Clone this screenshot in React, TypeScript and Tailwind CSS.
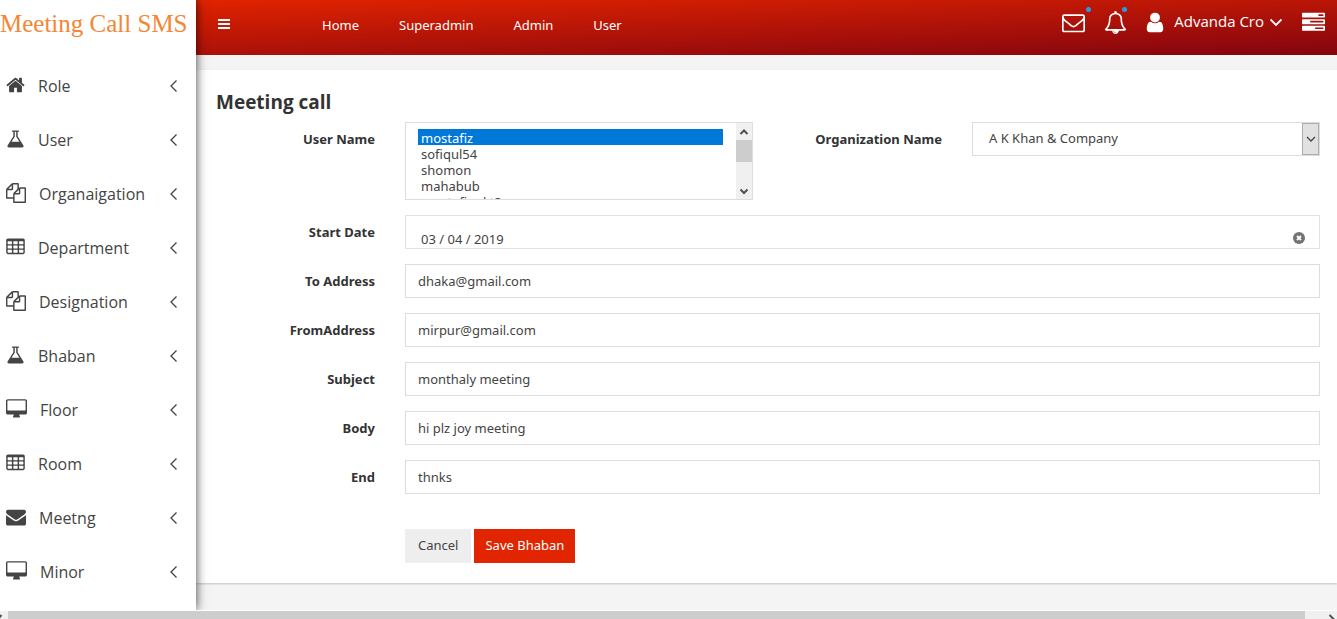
import React from "react";

type IconShape = { box: string; width: string; path: string };

const cell = (x: number, y: number) =>
  `M${x} ${y}v-192q0-14-9-23t-23-9h-320q-14 0-23 9t-9 23v192q0 14 9 23t23 9h320q14 0 23-9t9-23z`;

const TABLE_PATH =
  [576, 1088, 1600].flatMap((x) => [1376, 992, 608].map((y) => cell(x, y))).join("") +
  "M1728 288v1088q0 66-47 113t-113 47h-1344q-66 0-113-47t-47-113v-1088q0-66 47-113t113-47h1344q66 0 113 47t47 113z";

const icons: Record<string, IconShape> = {
  home: {
    box: "64 0 1664 1792",
    width: "w-[19px]",
    path: "M1472 992v480q0 26-19 45t-45 19h-384v-384h-256v384h-384q-26 0-45-19t-19-45v-480q0-1 .5-3t.5-3l575-474 575 474q1 2 1 6zm223-69l-62 74q-8 9-21 11h-3q-13 0-21-7l-692-577-692 577q-12 8-24 7-13-2-21-11l-62-74q-8-10-7-23.5t11-21.5l719-599q32-26 76-26t76 26l244 204v-195q0-14 9-23t23-9h192q14 0 23 9t9 23v408l219 182q10 8 11 21.5t-7 23.5z",
  },
  flask: {
    box: "64 0 1664 1792",
    width: "w-[19px]",
    path: "M1591 1448q56 89 21.5 152.5t-140.5 63.5h-1152q-106 0-140.5-63.5t21.5-152.5l503-793v-399h-64q-26 0-45-19t-19-45 19-45 45-19h512q26 0 45 19t19 45-19 45-45 19h-64v399zm-779-725l-272 429h712l-272-429-20-31v-436h-128v436z",
  },
  files: {
    box: "0 0 1792 1792",
    width: "w-[20px]",
    path: "M1696 384q40 0 68 28t28 68v1216q0 40-28 68t-68 28h-960q-40 0-68-28t-28-68v-288h-544q-40 0-68-28t-28-68v-672q0-40 20-88t48-76l408-408q28-28 76-48t88-20h416q40 0 68 28t28 68v328q68-40 128-40h416zm-544 213l-299 299h299v-299zm-640-384l-299 299h299v-299zm196 647l316-316v-416h-384v416q0 40-28 68t-68 28h-416v640h512v-256q0-40 20-88t48-76zm956 804v-1152h-384v416q0 40-28 68t-68 28h-416v640h896z",
  },
  table: { box: "64 0 1664 1792", width: "w-[19px]", path: TABLE_PATH },
  desktop: {
    box: "-64 0 1920 1792",
    width: "w-[21px]",
    path: "M1728 992v-832q0-13-9.5-22.5t-22.5-9.5h-1600q-13 0-22.5 9.5t-9.5 22.5v832q0 13 9.5 22.5t22.5 9.5h1600q13 0 22.5-9.5t9.5-22.5zm128-832v1088q0 66-47 113t-113 47h-544q0 37 16 77.5t32 71 16 43.5q0 26-19 45t-45 19h-512q-26 0-45-19t-19-45q0-14 16-44t32-70 16-78h-544q-66 0-113-47t-47-113v-1088q0-66 47-113t113-47h1600q66 0 113 47t47 113z",
  },
  envelope: {
    box: "0 0 1792 1792",
    width: "w-[20px]",
    path: "M1792 710v794q0 66-47 113t-113 47h-1472q-66 0-113-47t-47-113v-794q44 49 101 87 362 246 497 345 57 42 92.5 65.5t94.5 48 110 24.5h2q51 0 110-24.5t94.5-48 92.5-65.5q170-123 498-345 57-39 100-87zm0-294q0 79-49 151t-122 123q-376 261-468 325-10 7-42.5 31t-54 38.5-52 32.5-57.5 27-50 9h-2q-23 0-50-9t-57.5-27-52-32.5-54-38.5-42.5-31q-91-64-262-182.5t-205-142.5q-62-42-117-115.5t-55-136.5q0-78 41.5-130t118.5-52h1472q65 0 112.5 47t47.5 113z",
  },
};

const MAIL_PATH =
  "M1664 1504v-768q-32 36-69 66-268 206-426 338-51 43-83 67t-86.5 48.5-102.5 24.5h-2q-48 0-102.5-24.5t-86.5-48.5-83-67q-158-132-426-338-37-30-69-66v768q0 13 9.5 22.5t22.5 9.5h1472q13 0 22.5-9.5t9.5-22.5zm0-1051v-24.5l-.5-13-3-12.5-5.5-9-9-7.5-14-2.5h-1472q-13 0-22.5 9.5t-9.5 22.5q0 168 147 284 193 152 401 317 6 5 35 29.5t46 37.5 44.5 31.5 50.5 27.5 43 9h2q20 0 43-9t50.5-27.5 44.5-31.5 46-37.5 35-29.5q208-165 401-317 54-43 100.5-115.5t46.5-131.5zm128-37v1088q0 66-47 113t-113 47h-1472q-66 0-113-47t-47-113v-1088q0-66 47-113t113-47h1472q66 0 113 47t47 113z";
const BELL_PATH =
  "M912 1696q0-16-16-16-59 0-101.5-42.5t-42.5-101.5q0-16-16-16t-16 16q0 73 51.5 124.5t124.5 51.5q16 0 16-16zm-666-288h1300q-266-300-266-832 0-51-24-105t-69-103-121.5-80.5-169.5-31.5-169.5 31.5-121.5 80.5-69 103-24 105q0 532-266 832zm1482 0q0 52-38 90t-90 38h-448q0 106-75 181t-181 75-181-75-75-181h-448q-52 0-90-38t-38-90q50-42 91-88t85-119.5 74.5-158.5 50-206 19.5-260q0-152 117-282.5t307-158.5q-8-19-8-39 0-40 28-68t68-28 68 28 28 68q0 20-8 39 190 28 307 158.5t117 282.5q0 139 19.5 260t50 206 74.5 158.5 85 119.5 91 88z";
const USER_PATH =
  "M1536 1399q0 109-62.5 187t-150.5 78h-854q-88 0-150.5-78t-62.5-187q0-85 8.5-160.5t31.5-152 58.5-131 94-89 134.5-34.5q131 128 313 128t313-128q76 0 134.5 34.5t94 89 58.5 131 31.5 152 8.5 160.5zm-256-887q0 159-112.5 271.5t-271.5 112.5-271.5-112.5-112.5-271.5 112.5-271.5 271.5-112.5 271.5 112.5 112.5 271.5z";
const TASKS_PATH =
  "M1024 1408h640v-128h-640v128zm-384-512h1024v-128h-1024v128zm640-512h384v-128h-384v128zm512 832v256q0 26-19 45t-45 19h-1664q-26 0-45-19t-19-45v-256q0-26 19-45t45-19h1664q26 0 45 19t19 45zm0-512v256q0 26-19 45t-45 19h-1664q-26 0-45-19t-19-45v-256q0-26 19-45t45-19h1664q26 0 45 19t19 45zm0-512v256q0 26-19 45t-45 19h-1664q-26 0-45-19t-19-45v-256q0-26 19-45t45-19h1664q26 0 45 19t19 45z";

const menu: [keyof typeof icons, string][] = [
  ["home", "Role"],
  ["flask", "User"],
  ["files", "Organaigation"],
  ["table", "Department"],
  ["files", "Designation"],
  ["flask", "Bhaban"],
  ["desktop", "Floor"],
  ["table", "Room"],
  ["envelope", "Meetng"],
  ["desktop", "Minor"],
];

function Chevron({ d, className, stroke = 1 }: { d: string; className: string; stroke?: number }) {
  return (
    <svg viewBox="0 0 12 12" className={className} fill="none" stroke="currentColor" strokeWidth={stroke} aria-hidden="true">
      <path d={d} />
    </svg>
  );
}

function Sidebar() {
  return (
    <aside className="z-10 w-[196px] shrink-0 bg-white shadow-[0_0_10px_rgba(0,0,0,0.75)]">
      <a href="#home" className="block h-[59px] whitespace-nowrap pt-2 font-['Liberation_Serif',serif] text-[25px] leading-8 text-[#f58634]">
        Meeting Call SMS
      </a>
      <nav className="font-['Open_Sans',sans-serif]">
        {menu.map(([name, label]) => (
          <a key={label} href={`#${label}`} className="flex h-[54px] items-center pl-1.5 pr-4 text-base text-[#444]">
            <svg viewBox={icons[name].box} className={`${icons[name].width} mb-0.5 mr-[13px] h-5 shrink-0`} fill="currentColor" aria-hidden="true">
              <path d={icons[name].path} fillRule={name === "table" ? "evenodd" : "nonzero"} />
            </svg>
            <span className="flex-1">{label}</span>
            <Chevron d="M8.500 0.500 3 6l5.500 5.500" className="size-3" stroke={1.3} />
          </a>
        ))}
      </nav>
    </aside>
  );
}

function Header() {
  return (
    <header className="flex h-[55px] items-start bg-[linear-gradient(178deg,#e12300,#83040f)] pl-[22px] pr-3 text-white">
      <button type="button" aria-label="Toggle menu" className="mt-[19px]">
        <svg viewBox="0 0 12 11" className="h-[11px] w-3" fill="currentColor" aria-hidden="true">
          <path d="M0 0h12v2H0zM0 4h12v2H0zM0 8h12v2H0z" />
        </svg>
      </button>
      <nav className="ml-[92px] mt-[15px] flex gap-10 text-[13px] leading-5">
        {["Home", "Superadmin", "Admin", "User"].map((t) => (
          <a key={t} href={`#${t}`}>{t}</a>
        ))}
      </nav>
      <div className="ml-auto flex h-11 items-center">
        <button type="button" aria-label="Messages" className="relative mr-[19px]">
          <svg viewBox="0 0 1792 1792" className="size-[23px]" fill="currentColor" aria-hidden="true"><path d={MAIL_PATH} /></svg>
          <span className="absolute -right-1.5 -top-1 size-[5px] rounded-full bg-[#2d9ae0]" />
        </button>
        <button type="button" aria-label="Notifications" className="relative mr-[19px]">
          <svg viewBox="0 0 1792 1792" className="size-[23px]" fill="currentColor" aria-hidden="true"><path d={BELL_PATH} /></svg>
          <span className="absolute right-0 -top-1 size-[5px] rounded-full bg-[#2d9ae0]" />
        </button>
        <button type="button" className="flex items-center font-['Open_Sans',sans-serif] text-[15px]">
          <svg viewBox="256 0 1280 1792" className="mr-2.5 h-[23px] w-[18px]" fill="currentColor" aria-hidden="true"><path d={USER_PATH} /></svg>
          <span className="pb-0.5">Advanda Cro</span>
          <Chevron d="M0.5 3.5 6 9l5.5-5.500" className="ml-1.5 size-3" stroke={1.8} />
        </button>
        <button type="button" aria-label="Tasks" className="ml-5">
          <svg viewBox="0 0 1792 1792" className="size-[23px]" fill="currentColor" aria-hidden="true"><path d={TASKS_PATH} /></svg>
        </button>
      </div>
    </header>
  );
}

const control = "block w-full border border-[#ddd] bg-white text-[13px] text-[#444] outline-none";
const labelStyle = "px-[15px] pt-[7px] text-right text-[13px] font-bold leading-5 text-[#333]";

function TextRow({ id, label, value }: { id: string; label: string; value: string }) {
  return (
    <>
      <label htmlFor={id} className={`${labelStyle} col-span-2`}>{label}</label>
      <div className="col-span-10 px-[15px]">
        <input id={id} defaultValue={value} className={`${control} h-[34px] px-3`} />
      </div>
    </>
  );
}

function UserList() {
  return (
    <div className="col-span-4 px-[15px]">
      <div className="flex h-[78px] border border-[#ddd]">
        <select
          id="users"
          multiple
          defaultValue={["mostafiz"]}
          className="h-full min-w-0 flex-1 appearance-none overflow-y-scroll bg-white py-1.5 pl-3 pr-[13px] text-[13px] text-[#444] outline-none [scrollbar-width:none]"
        >
          {["mostafiz", "sofiqul54", "shomon", "mahabub", "mostafiqul t3"].map((u) => (
            <option
              key={u}
              className="h-4 min-h-4 px-[3px] py-0 leading-[14px] checked:bg-[linear-gradient(#0078d7,#0078d7)] checked:[-webkit-text-fill-color:#fff]"
            >
              {u}
            </option>
          ))}
        </select>
        <div className="flex w-4 flex-col items-center bg-[#f0f0f0] text-[#505050]" aria-hidden="true">
          <Chevron d="M2.5 8 6 4.5 9.500 8" className="mt-[3px] size-3" stroke={2} />
          <div className="mt-0.5 h-[22px] w-full bg-[#cdcdcd]" />
          <Chevron d="M2.500 4.500 6 8l3.500-3.500" className="mb-0.5 mt-auto size-3" stroke={2} />
        </div>
      </div>
    </div>
  );
}

export default function App() {
  return (
    <div className="flex min-h-screen flex-col bg-white font-['Noto_Sans','Open_Sans',sans-serif]">
      <div className="flex flex-1 overflow-hidden">
        <Sidebar />
        <div className="min-w-0 flex-1 bg-[#f4f4f4]">
          <Header />
          <main className="mt-[15px] bg-white pb-5 pl-[5px] pr-0.5 pt-[18px] shadow-[0_1px_2px_rgba(0,0,0,0.2)]">
            <h1 className="px-[15px] font-['Open_Sans',sans-serif] text-[19px] font-bold leading-7 text-[#333]">Meeting call</h1>
            <form className="mt-1.5 grid grid-cols-12 gap-y-[15px]">
              <label htmlFor="users" className={`${labelStyle} col-span-2`}>User Name</label>
              <UserList />
              <label htmlFor="org" className={`${labelStyle} col-span-2`}>Organization Name</label>
              <div className="col-span-4 px-[15px]">
                <div className="flex h-[34px] border border-[#ddd]">
                  <select id="org" className="min-w-0 flex-1 appearance-none bg-white px-4 text-[13px] text-[#444] outline-none">
                    <option>A K Khan &amp; Company</option>
                  </select>
                  <span className="flex w-[17px] items-center justify-center border border-[#adadad] bg-[#e1e1e1] text-[#444]" aria-hidden="true">
                    <Chevron d="M2 4l4 4 4-4" className="size-3" stroke={1.3} />
                  </span>
                </div>
              </div>
              <label htmlFor="date" className={`${labelStyle} col-span-2`}>Start Date</label>
              <div className="col-span-10 px-[15px]">
                <div className="flex h-[34px] items-end border border-[#e2e2e2] pl-[15px] pr-3.5">
                  <input id="date" defaultValue="03 / 04 / 2019" className="h-[18px] min-w-0 flex-1 bg-white text-[13px] leading-[18px] text-[#444] outline-none" />
                  <button type="button" aria-label="Clear date" className="mb-1">
                    <svg viewBox="0 0 12 12" className="size-3" aria-hidden="true">
                      <circle cx="6" cy="6" r="6" fill="#737373" />
                      <path d="M4 4l4 4M8 4 4 8" stroke="#fff" strokeWidth="1.800" />
                    </svg>
                  </button>
                </div>
              </div>
              <TextRow id="to" label="To Address" value="dhaka@gmail.com" />
              <TextRow id="from" label="FromAddress" value="mirpur@gmail.com" />
              <TextRow id="subject" label="Subject" value="monthaly meeting" />
              <TextRow id="body" label="Body" value="hi plz joy meeting" />
              <TextRow id="end" label="End" value="thnks" />
              <div className="col-span-10 col-start-3 mt-5 flex gap-[3px] px-[15px] text-[13px]">
                <button type="button" className="h-[34px] bg-[#eee] px-[13px] text-[#444]">Cancel</button>
                <button type="submit" className="h-[34px] bg-[#e02500] px-[11px] text-white">Save Bhaban</button>
              </div>
            </form>
          </main>
        </div>
      </div>
      <div className="flex h-[9px] border-t border-white bg-[#f0f0f0] text-[#505050]" aria-hidden="true">
        <svg viewBox="0 0 8 8" className="size-2" fill="none" stroke="currentColor" strokeWidth="2"><path d="M1.500 4-2 8" /></svg>
        <div className="flex-1 bg-[#cdcdcd]" />
        <svg viewBox="0 0 32 8" className="h-2 w-8" fill="none" stroke="currentColor" strokeWidth="2"><path d="M24.500 4 29 8.500" /></svg>
      </div>
    </div>
  );
}
